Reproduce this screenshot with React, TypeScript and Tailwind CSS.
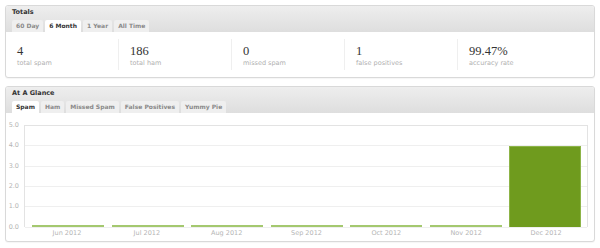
import React from "react";

const sans = { fontFamily: '"DejaVu Sans", Verdana, sans-serif' };

function Tabs({ tabs, active }: { tabs: string[]; active: number }) {
  return (
    <div className="flex h-[12px] items-end gap-[2px] pl-[6px]">
      {tabs.map((t, i) => (
        <div
          key={t}
          className={
            "flex h-[12px] items-center rounded-t-[2px] px-[4px] text-[6px] font-bold leading-none " +
            (i === active ? "bg-white text-[#333]" : "bg-[#efefef] text-[#8a8a8a]")
          }
        >
          {t}
        </div>
      ))}
    </div>
  );
}

function Panel({ title, tabs, active, children }: { title: string; tabs: string[]; active: number; children: React.ReactNode }) {
  return (
    <div className="overflow-hidden rounded-[3px] border border-[#d9d9d9] bg-white shadow-[0_1px_1px_rgba(0,0,0,0.04)]">
      <div className="bg-gradient-to-b from-[#eeeeee] to-[#dedede]">
        <div className="flex h-[14px] items-center pl-[6px] text-[6.5px] font-bold text-[#333]">{title}</div>
        <Tabs tabs={tabs} active={active} />
      </div>
      {children}
    </div>
  );
}

const stats = [
  { v: "4", l: "total spam" },
  { v: "186", l: "total ham" },
  { v: "0", l: "missed spam" },
  { v: "1", l: "false positives" },
  { v: "99.47%", l: "accuracy rate" },
];

const months = ["Jun 2012", "Jul 2012", "Aug 2012", "Sep 2012", "Oct 2012", "Nov 2012", "Dec 2012"];
const values = [0, 0, 0, 0, 0, 0, 4];

export default function App() {
  return (
    <div className="h-[248px] w-[600px] bg-white px-[5px] pt-[5px]" style={sans}>
      <Panel title="Totals" tabs={["60 Day", "6 Month", "1 Year", "All Time"]} active={1}>
        <div className="flex h-[45px] items-center">
          {stats.map((s, i) => (
            <div
              key={s.l}
              className={"flex h-[31px] w-[113px] flex-col pl-[11px] " + (i < 4 ? "border-r border-[#efefef]" : "")}
            >
              <div className="mt-[6px] text-[12.5px] leading-[13px] text-[#333]" style={{ fontFamily: '"Liberation Serif", Georgia, serif' }}>
                {s.v}
              </div>
              <div className="mt-[1px] text-[6.5px] leading-[8px] text-[#b0b0b0]">{s.l}</div>
            </div>
          ))}
        </div>
      </Panel>
      <div className="h-[8px]" />
      <Panel title="At A Glance" tabs={["Spam", "Ham", "Missed Spam", "False Positives", "Yummy Pie"]} active={0}>
        <div className="flex h-[128px] pt-[12px] pr-[6px]">
          <div className="relative h-[102px] w-[13px] text-[6.5px] text-[#b5b5b5]">
            {["5.0", "4.0", "3.0", "2.0", "1.0", "0.0"].map((l, i) => (
              <div key={l} className="absolute right-0 leading-none" style={{ top: i * 20.3 - 3 }}>
                {l}
              </div>
            ))}
          </div>
          <div className="ml-[5px] flex flex-1 flex-col">
            <div className="relative h-[102px] border-x border-t border-[#e3e3e3]">
              {[1, 2, 3, 4, 5].map((i) => (
                <div key={i} className="absolute left-0 right-0 h-px bg-[#efefef]" style={{ top: i * 20.3 - 1 }} />
              ))}
              <div className="absolute inset-0 flex items-end justify-between pl-[7px] pr-[6px]">
                {values.map((v, i) => (
                  <div
                    key={i}
                    className={"relative w-[72px] " + (v > 0 ? "bg-[#6f9b1e] border-x border-t border-[#8db448]" : "bg-[#a4c86f]")}
                    style={{ height: v > 0 ? v * 20.3 : 2 }}
                  />
                ))}
              </div>
            </div>
            <div className="flex justify-between pl-[7px] pr-[6px] pt-[3px]">
              {months.map((m) => (
                <div key={m} className="w-[72px] text-center text-[6.5px] leading-none text-[#b5b5b5]">
                  {m}
                </div>
              ))}
            </div>
          </div>
        </div>
      </Panel>
    </div>
  );
}
